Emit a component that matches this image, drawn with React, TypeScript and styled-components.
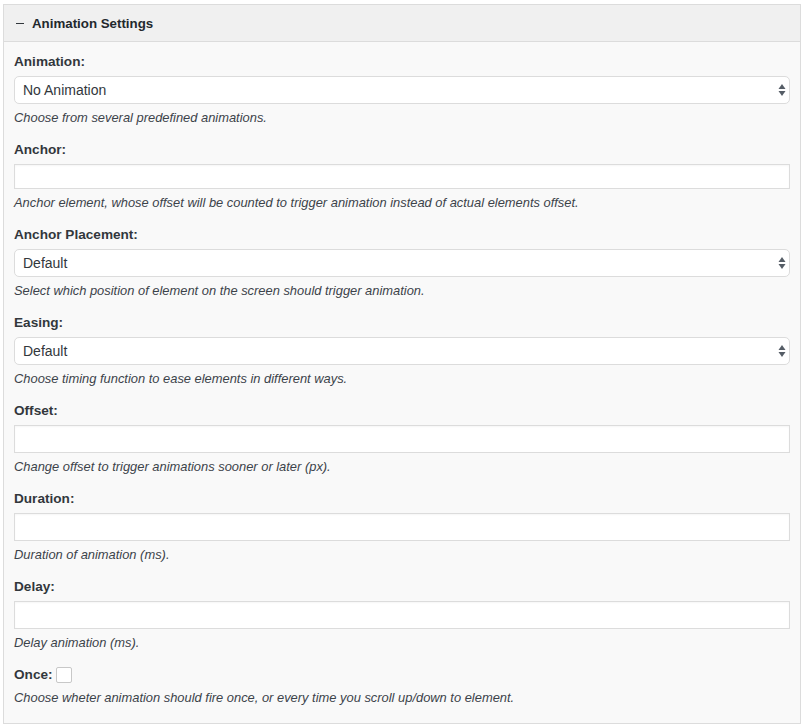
import styled, { createGlobalStyle } from "styled-components";

const GlobalStyle = createGlobalStyle`
  * { box-sizing: border-box; }
  body {
    margin: 0;
    background: #ffffff;
    font-family: "Liberation Sans", Arial, Helvetica, sans-serif;
    color: #32373c;
  }
`;

type Field =
  | { kind: "select"; label: string; value: string; help: string }
  | { kind: "input"; label: string; help: string; short?: boolean };

const fields: Field[] = [
  { kind: "select", label: "Animation:", value: "No Animation", help: "Choose from several predefined animations." },
  {
    kind: "input",
    label: "Anchor:",
    short: true,
    help: "Anchor element, whose offset will be counted to trigger animation instead of actual elements offset.",
  },
  {
    kind: "select",
    label: "Anchor Placement:",
    value: "Default",
    help: "Select which position of element on the screen should trigger animation.",
  },
  { kind: "select", label: "Easing:", value: "Default", help: "Choose timing function to ease elements in different ways." },
  { kind: "input", label: "Offset:", help: "Change offset to trigger animations sooner or later (px)." },
  { kind: "input", label: "Duration:", help: "Duration of animation (ms)." },
  { kind: "input", label: "Delay:", help: "Delay animation (ms)." },
];

const Arrows = () => (
  <ArrowIcon width="8" height="14" viewBox="0 0 8 14">
    <path d="M4 1 L7.5 6 L0.5 6 Z" fill="#555d66" />
    <path d="M4 13 L7.5 8 L0.5 8 Z" fill="#555d66" />
  </ArrowIcon>
);

export default function App() {
  return (
    <>
      <GlobalStyle />
      <Page>
        <Panel>
          <Header>
            <Minus />
            <HeaderTitle>Animation Settings</HeaderTitle>
          </Header>
          <Body>
            {fields.map((f) => (
              <Row key={f.label}>
                <Label>{f.label}</Label>
                {f.kind === "select" ? (
                  <SelectWrap>
                    <Select defaultValue={f.value}>
                      <option>{f.value}</option>
                    </Select>
                    <Arrows />
                  </SelectWrap>
                ) : (
                  <TextInput type="text" $short={f.short} />
                )}
                <Help>{f.help}</Help>
              </Row>
            ))}
            <Row>
              <CheckLine>
                <Label as="span">Once:</Label>
                <CheckBox type="checkbox" />
              </CheckLine>
              <Help>Choose wheter animation should fire once, or every time you scroll up/down to element.</Help>
            </Row>
          </Body>
        </Panel>
      </Page>
    </>
  );
}

const Page = styled.div`
  padding: 4px 4px 4px 3px;
`;

const Panel = styled.div`
  width: 798px;
  border: 1px solid #dcdcdc;
  background: #f9f9f9;
`;

const Header = styled.div`
  display: flex;
  align-items: center;
  height: 37px;
  padding: 1px 12px 0 12px;
  background: #f0f0f0;
  border-bottom: 1px solid #dcdcdc;
`;

const Minus = styled.span`
  display: block;
  width: 8px;
  height: 1.5px;
  background: #32373c;
  margin: 0 8px 0 0;
`;

const HeaderTitle = styled.span`
  font-size: 13.3px;
  font-weight: 700;
  line-height: 18px;
  color: #23282d;
`;

const Body = styled.div`
  display: flex;
  flex-direction: column;
  gap: 14px;
  padding: 11px 11px 16px 10px;
`;

const Row = styled.div`
  display: flex;
  flex-direction: column;
`;

const Label = styled.label`
  display: block;
  font-size: 13.6px;
  font-weight: 700;
  line-height: 18px;
  color: #32373c;
  margin-bottom: 5px;
`;

const SelectWrap = styled.div`
  position: relative;
  width: 776px;
  height: 28px;
`;

const Select = styled.select`
  appearance: none;
  -webkit-appearance: none;
  width: 100%;
  height: 28px;
  padding: 0 24px 0 8px;
  border: 1px solid #dcdcdc;
  border-radius: 5px;
  background: #ffffff;
  font-family: "Liberation Sans", Arial, Helvetica, sans-serif;
  font-size: 14px;
  color: #32373c;
  outline: none;
`;

const ArrowIcon = styled.svg`
  position: absolute;
  right: 4px;
  top: 7px;
  pointer-events: none;
`;

const TextInput = styled.input<{ $short?: boolean }>`
  width: 776px;
  height: ${(p) => (p.$short ? "25px" : "28px")};
  margin: 0;
  padding: 0 8px;
  border: 1px solid #dcdcdc;
  border-radius: 0;
  background: #ffffff;
  box-shadow: inset 0 1px 2px rgba(0, 0, 0, 0.04);
  outline: none;
`;

const Help = styled.p`
  margin: 5px 0 0 0;
  font-size: 12.9px;
  font-style: italic;
  line-height: 18px;
  color: #3c434a;
`;

const CheckLine = styled.div`
  display: flex;
  align-items: center;
  height: 18px;

  & > span {
    margin-bottom: 0;
  }
`;

const CheckBox = styled.input`
  appearance: none;
  -webkit-appearance: none;
  width: 16px;
  height: 16px;
  margin: 0 0 0 3px;
  border: 1px solid #c8c8c8;
  border-radius: 2px;
  background: #ffffff;
`;
